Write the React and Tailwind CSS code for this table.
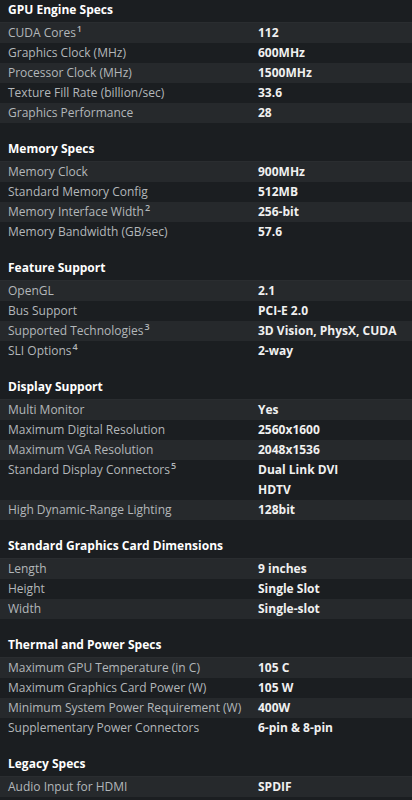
import React from 'react';

const sections = [
  {
    title: 'GPU Engine Specs',
    rows: [
      { label: 'CUDA Cores', sup: '1', values: ['112'] },
      { label: 'Graphics Clock (MHz)', values: ['600MHz'] },
      { label: 'Processor Clock (MHz)', values: ['1500MHz'] },
      { label: 'Texture Fill Rate (billion/sec)', values: ['33.6'] },
      { label: 'Graphics Performance', values: ['28'] },
    ],
  },
  {
    title: 'Memory Specs',
    rows: [
      { label: 'Memory Clock', values: ['900MHz'] },
      { label: 'Standard Memory Config', values: ['512MB'] },
      { label: 'Memory Interface Width', sup: '2', values: ['256-bit'] },
      { label: 'Memory Bandwidth (GB/sec)', values: ['57.6'] },
    ],
  },
  {
    title: 'Feature Support',
    rows: [
      { label: 'OpenGL', values: ['2.1'] },
      { label: 'Bus Support', values: ['PCI-E 2.0'] },
      { label: 'Supported Technologies', sup: '3', values: ['3D Vision, PhysX, CUDA'] },
      { label: 'SLI Options', sup: '4', values: ['2-way'] },
    ],
  },
  {
    title: 'Display Support',
    rows: [
      { label: 'Multi Monitor', values: ['Yes'] },
      { label: 'Maximum Digital Resolution', values: ['2560x1600'] },
      { label: 'Maximum VGA Resolution', values: ['2048x1536'] },
      { label: 'Standard Display Connectors', sup: '5', values: ['Dual Link DVI', 'HDTV'] },
      { label: 'High Dynamic-Range Lighting', values: ['128bit'] },
    ],
  },
  {
    title: 'Standard Graphics Card Dimensions',
    rows: [
      { label: 'Length', values: ['9 inches'] },
      { label: 'Height', values: ['Single Slot'] },
      { label: 'Width', values: ['Single-slot'] },
    ],
  },
  {
    title: 'Thermal and Power Specs',
    rows: [
      { label: 'Maximum GPU Temperature (in C)', values: ['105 C'] },
      { label: 'Maximum Graphics Card Power (W)', values: ['105 W'] },
      { label: 'Minimum System Power Requirement (W)', values: ['400W'] },
      { label: 'Supplementary Power Connectors', values: ['6-pin & 8-pin'] },
    ],
  },
  {
    title: 'Legacy Specs',
    rows: [{ label: 'Audio Input for HDMI', values: ['SPDIF'] }],
  },
];

function SpecRow({ row, index }) {
  return (
    <div className={`flex ${index % 2 === 0 ? 'bg-[#26292c]' : 'bg-[#1b1e21]'}`}>
      <div className="w-[258px] shrink-0 pl-2 leading-[20px] text-[#b3b7ba] whitespace-nowrap">
        {row.label}
        {row.sup && <sup className="text-[9px] font-semibold ml-[1px] -top-[5px]">{row.sup}</sup>}
      </div>
      <div className="flex flex-col font-bold text-[#f0f0f0] leading-[20px]">
        {row.values.map(v => (
          <span key={v}>{v}</span>
        ))}
      </div>
    </div>
  );
}

export default function App() {
  return (
    <div
      className="w-[412px] min-h-[800px] bg-[#1b1e21] text-[12px] overflow-hidden"
      style={{ fontFamily: '"Open Sans", sans-serif' }}
    >
      {sections.map((section, si) => (
        <div key={section.title} className={si > 0 ? 'pt-4' : ''}>
          <div className="h-[23px] flex items-center pb-[2px] pl-2 font-bold text-[12px] text-white border-b border-[#2a2d30]">
            {section.title}
          </div>
          {section.rows.map((row, i) => (
            <SpecRow key={row.label} row={row} index={i} />
          ))}
        </div>
      ))}
    </div>
  );
}
